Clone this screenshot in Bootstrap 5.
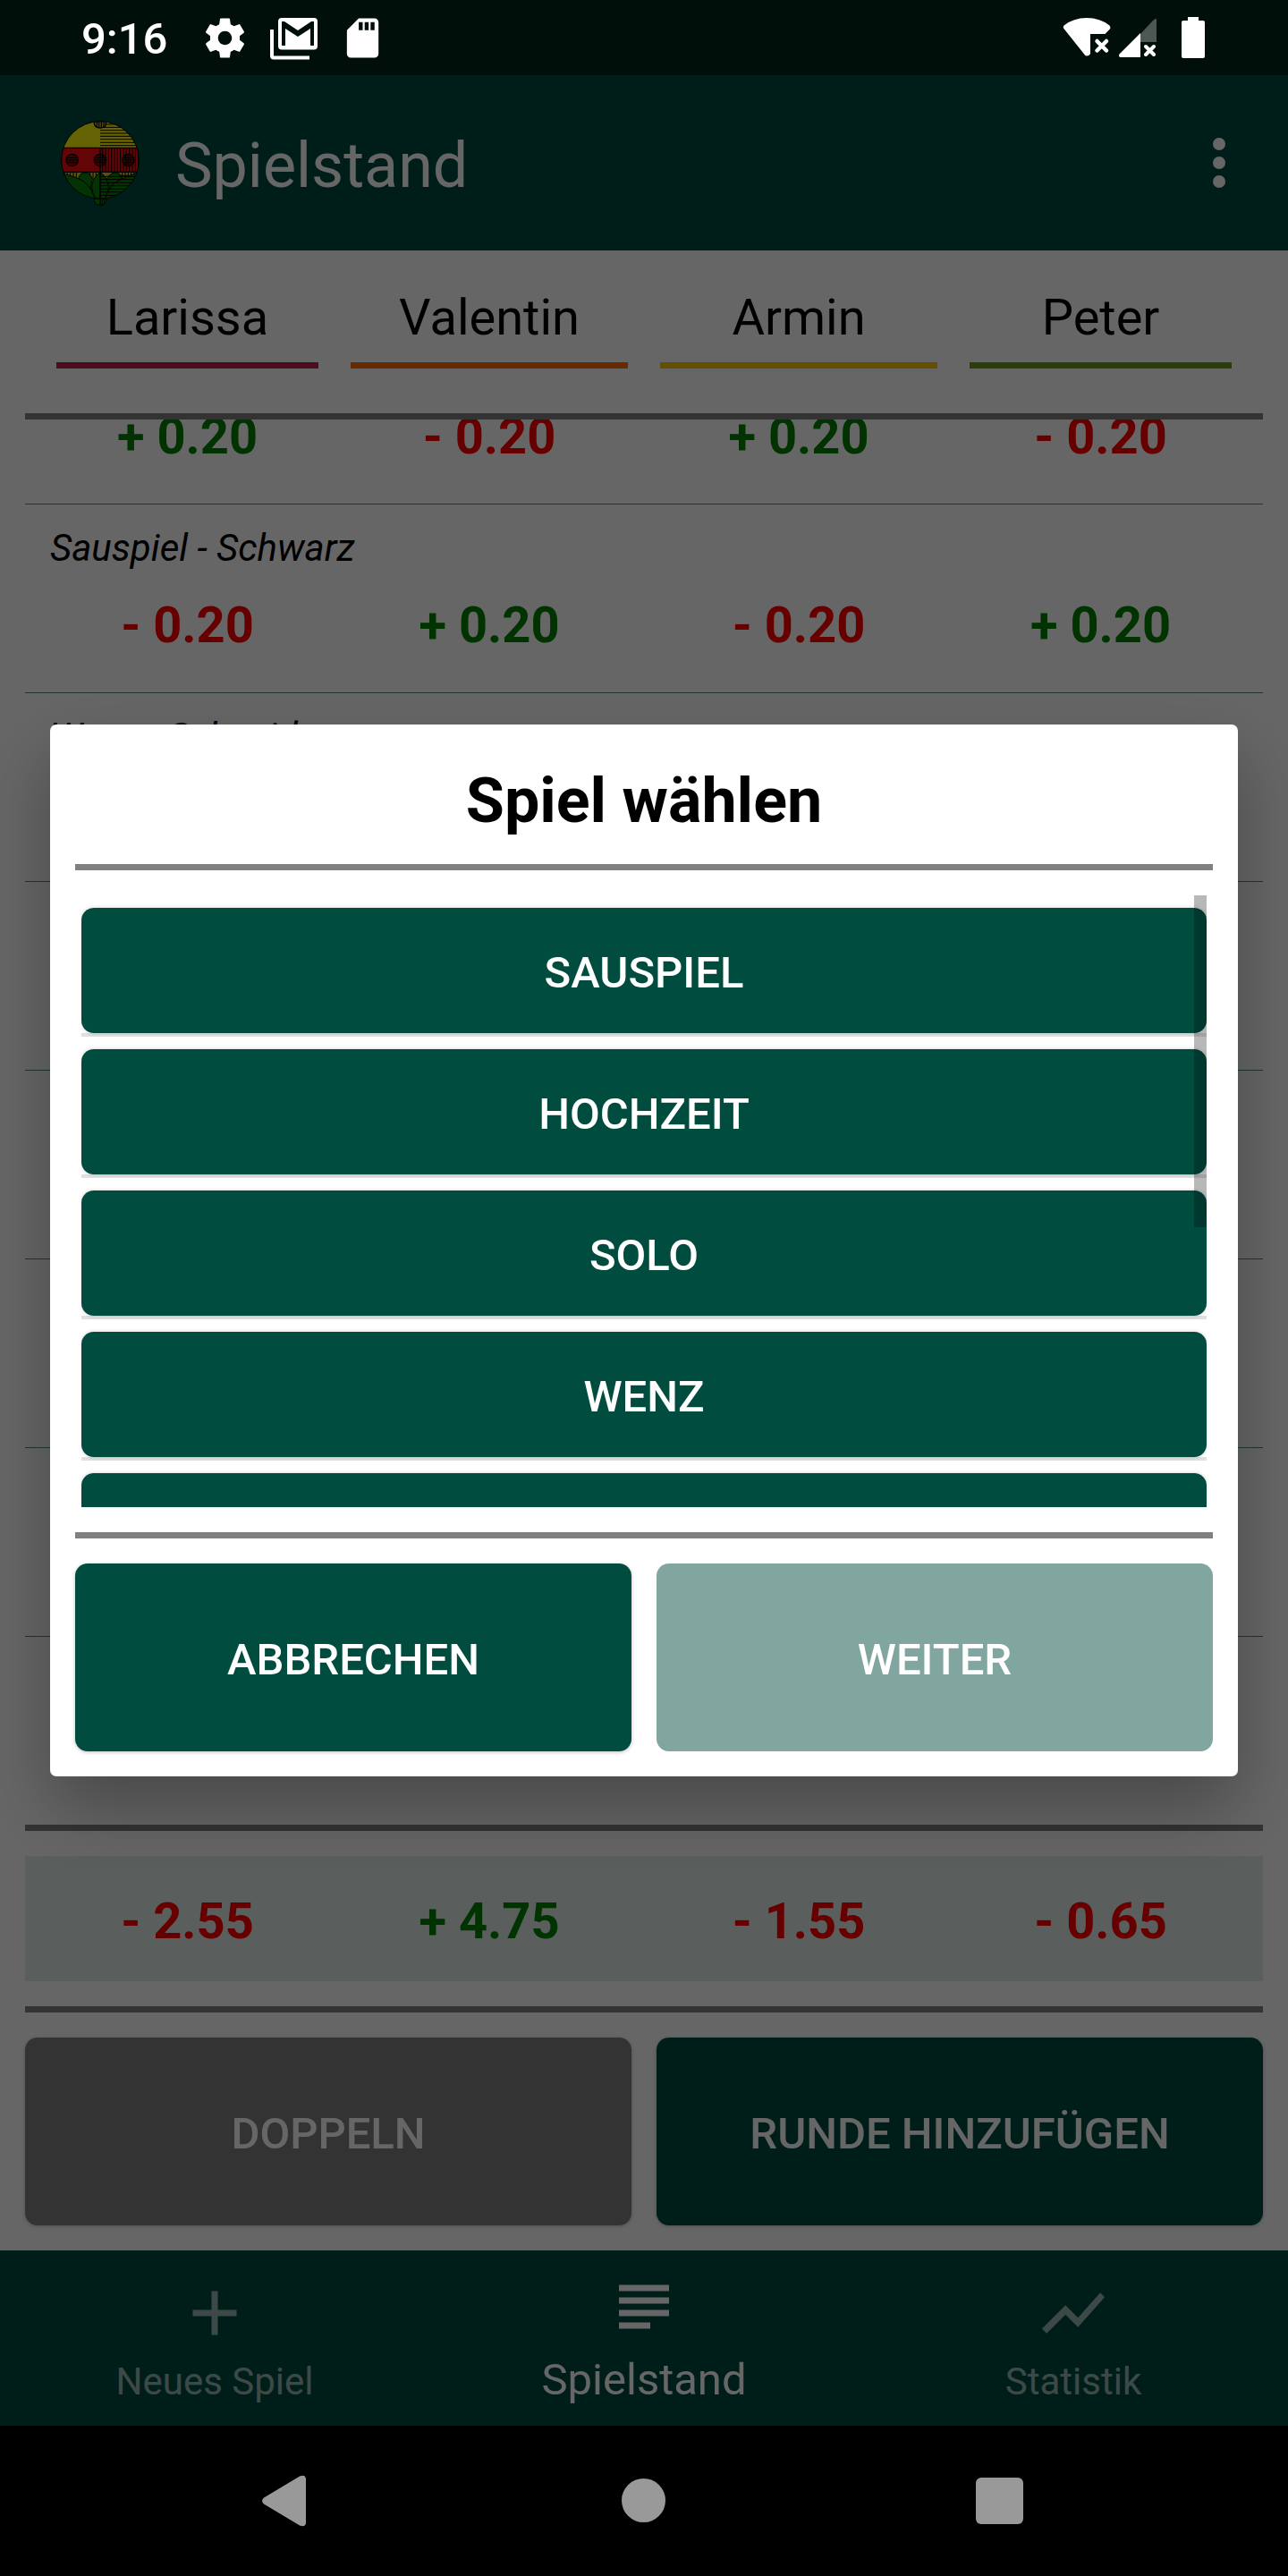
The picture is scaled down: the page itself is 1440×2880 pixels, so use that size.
<!DOCTYPE html>
<html lang="de">
<head>
<meta charset="utf-8">
<meta name="viewport" content="width=device-width, initial-scale=1">
<title>Spielstand</title>
<link href="https://cdn.jsdelivr.net/npm/bootstrap@5.3.0/dist/css/bootstrap.min.css" rel="stylesheet">
<style>
  :root { --brand: #004d40; --rule: #808080; }
  body { font-family: Roboto, "Liberation Sans", sans-serif; color: #000; background: #fff; }
  svg { display: block; }

  /* system bars stay above the dimmed page */
  .status-strip, .system-keys { position: relative; z-index: 1060; }
  .status-strip { height: 84px; padding: 0 93px 0 91px; background: #000f0a; color: #fff; font-size: 49px; font-weight: 500; line-height: 56px; }
  .status-icons { gap: 24px; margin-left: 38px; }
  .system-keys { height: 168px; background: #000; color: #999; gap: 316px; }
  .system-keys button { all: unset; }

  .app-bar { height: 196px; padding: 0 66px; background: var(--brand); color: #fff; }
  .app-title { font-size: 70px; line-height: 82px; padding-top: 5px; margin-left: 38px; }
  .icon-btn { all: unset; }

  .rule { height: 7px; background: var(--rule); flex-shrink: 0; }
  .board { padding: 0 28px 28px; min-height: 0; }
  .score-grid { width: 100%; table-layout: fixed; border-collapse: separate; border-spacing: 0; flex-shrink: 0; }
  .score-grid th, .score-grid td { padding: 0 18px; text-align: center; font-size: 56px; line-height: 66px; }
  .score-grid th:first-child, .score-grid td:first-child { padding-left: 35px; }
  .score-grid th:last-child, .score-grid td:last-child { padding-right: 35px; }
  .player-head { margin: 42px 0 50px; }
  .player-head th { font-weight: 400; }
  .player-name { display: block; padding-bottom: 17px; border-bottom: 7px solid; }
  .tone-berry { border-color: #c2224f; }
  .tone-orange { border-color: #ff6b00; }
  .tone-gold { border-color: #fac400; }
  .tone-leaf { border-color: #6e9a1f; }

  .round-list { min-height: 0; overflow: hidden; }
  .score-grid .round-name td { height: 74px; padding: 24px 28px 0; font-size: 42px; line-height: 50px; font-style: italic; text-align: left; }
  .score-grid .round-score td { height: 137px; padding-top: 28px; padding-bottom: 42px; font-weight: 700; border-bottom: 1px solid #4a8c7c; }
  .score-grid tbody:last-child .round-score td { height: 136px; border-bottom: 0; }
  .score-grid td.plus { color: #008000; }
  .score-grid td.minus { color: #f00; }
  .total-band { margin: 28px 0; background: #e0eae8; }
  .score-grid.total-band td { height: 140px; padding-top: 6px; font-weight: 700; }

  .act { border: 0; border-radius: 14px; padding: 6px 0 0; background: var(--brand); color: #fff; font-size: 49px; line-height: 58px; font-weight: 500; text-transform: uppercase; }
  .act-tall { height: 210px; flex: 1 1 0; }
  .act-raised { box-shadow: 0 1px 4px rgba(0, 0, 0, .25); }
  .act-grey { background: #808080; }
  .act:disabled { background: #80a69f; color: #fff; }
  .btn-pair { gap: 28px; padding-top: 28px; }

  .tabs { height: 196px; background: var(--brand); }
  .tabs a { flex: 1 1 0; padding-top: 28px; color: rgba(255, 255, 255, .6); font-size: 42px; line-height: 50px; text-decoration: none; }
  .tabs a span { padding-top: 10px; }
  .tabs a.active { padding-top: 21px; color: #fff; font-size: 49px; line-height: 60px; }

  .modal-backdrop.show { opacity: .6; }
  .pick-modal { padding: 84px 56px 168px; }
  .pick-modal .modal-content { border: 0; border-radius: 7px; padding: 0 28px 28px; color: #000; box-shadow: 0 36px 80px rgba(0, 0, 0, .3); }
  .pick-title { margin: 0; padding: 44px 0 30px; font-size: 70px; line-height: 82px; font-weight: 700; }
  .pick-scroll { position: relative; height: 684px; margin: 28px 7px; overflow: hidden; }
  .pick-list { padding-top: 14px; gap: 14px; }
  .pick-list li { border-bottom: 4px solid #e0e0e0; }
  .pick-list .act { display: block; width: 100%; height: 140px; box-shadow: 0 0 4px rgba(0, 0, 0, .2); }
  .pick-thumb { position: absolute; top: 0; right: 0; width: 14px; height: 371px; background: rgba(0, 0, 0, .28); }
</style>
<script src="https://cdn.jsdelivr.net/npm/bootstrap@5.3.0/dist/js/bootstrap.bundle.min.js"></script>
</head>
<body class="d-flex flex-column vh-100 overflow-hidden">

<div class="status-strip d-flex align-items-center flex-shrink-0">
  <span class="pt-1">9:16</span>
  <div class="status-icons d-flex align-items-center">
    <svg width="53" height="53" viewBox="0 0 24 24" fill="currentColor"><path d="M19.43 12.98c.04-.32.07-.64.07-.98s-.03-.66-.07-.98l2.11-1.65c.19-.15.24-.42.12-.64l-2-3.46c-.12-.22-.39-.3-.61-.22l-2.49 1c-.52-.4-1.08-.73-1.69-.98l-.38-2.65C14.46 2.18 14.25 2 14 2h-4c-.25 0-.46.18-.49.42l-.38 2.65c-.61.25-1.17.59-1.69.98l-2.49-1c-.23-.09-.49 0-.61.22l-2 3.46c-.13.22-.07.49.12.64l2.11 1.65c-.04.32-.07.65-.07.98s.03.66.07.98l-2.11 1.65c-.19.15-.24.42-.12.64l2 3.46c.12.22.39.3.61.22l2.49-1c.52.4 1.08.73 1.69.98l.38 2.65c.03.24.24.42.49.42h4c.25 0 .46-.18.49-.42l.38-2.65c.61-.25 1.17-.59 1.69-.98l2.49 1c.23.09.49 0 .61-.22l2-3.46c.12-.22.07-.49-.12-.64l-2.11-1.65zM12 15.5c-1.93 0-3.5-1.57-3.5-3.5s1.57-3.5 3.5-3.5 3.5 1.57 3.5 3.5-1.57 3.5-3.5 3.5z"/></svg>
    <svg width="53" height="53" viewBox="0 0 53 53" fill="none"><path d="M2 17v29.500q0 2 2 2h40" stroke="currentColor" stroke-width="4"/><path fill="currentColor" fill-rule="evenodd" d="M13 4h36q4 0 4 4v27.500q0 4-4 4H13q-4 0-4-4V8q0-4 4-4zM13 8v27h4V16l14 9 14-9v19h4V8h-3L31 18 16 8z"/></svg>
    <svg width="53" height="53" viewBox="0 0 24 24" fill="currentColor"><path d="M18 2h-8L4.020 8 4 20c0 1.100.9 2 2 2h12c1.100 0 2-.9 2-2V4c0-1.100-.9-2-2-2zm-6 6h-2V4h2v4zm3 0h-2V4h2v4zm3 0h-2V4h2v4z"/></svg>
  </div>
  <div class="d-flex align-items-center ms-auto">
    <svg width="54" height="46" viewBox="0 0 54 46" fill="currentColor"><path d="M1.500 9.500Q12 1 27 1t25.500 8.500q1.500 2 .3 4L47.500 19H31v22q-1 2.500-4 2.500-1.500 0-2.500-1.500L1 12.500q-.8-1.500.5-3z"/><path d="M38.500 27l10.500 10.500M49 27L38.500 37.500" stroke="currentColor" stroke-width="4.500" stroke-linecap="round"/></svg>
    <svg class="ms-2" width="43" height="46" viewBox="0 0 43 46" fill="currentColor"><path d="M43 2v26H25V19L39 4q2-2 4-2z" opacity=".3"/><path d="M25 18v27H2.500Q0 44 1.500 41.500z"/><path d="M31 33l9 9M40 33l-9 9" stroke="currentColor" stroke-width="4" stroke-linecap="round"/></svg>
    <svg class="ms-4" width="30" height="46" viewBox="0 0 30 46" fill="currentColor"><path d="M11 0h12v4h5q2 0 2 2v38q0 2-2 2H6q-2 0-2-2V6q0-2 2-2h5z"/></svg>
  </div>
</div>

<header class="app-bar d-flex align-items-center flex-shrink-0">
  <svg width="92" height="98" viewBox="48 36 276 294" aria-label="Logo">
    <defs>
      <clipPath id="disc"><circle cx="186" cy="174" r="130"/></clipPath>
      <clipPath id="right-half"><rect x="186" y="40" width="140" height="270"/></clipPath>
    </defs>
    <g clip-path="url(#disc)">
      <rect x="50" y="40" width="280" height="93" fill="#fff80a"/>
      <rect x="50" y="133" width="280" height="81" fill="#f80a10"/>
      <rect x="50" y="214" width="280" height="92" fill="#e0c810"/>
      <path d="M66 214v30M76 214v30M86 214v30M96 214v30M106 214v30M152 214v24M162 214v24M172 214v24M260 214v40M270 214v30M280 214v24M290 214v24M300 214v24M250 226h60M250 236h60" stroke="#000" stroke-width="3"/>
      <g fill="#088008" stroke="#000" stroke-width="3">
        <path d="M112 242q4-28 24-26 16 0 24 22-10 24-2 44-14-30-46-40z"/>
        <path d="M260 242q-4-28-24-26-16 0-30 24v40z"/>
        <path d="M54 218Q112 230 136 250T170 312H90z"/>
        <path d="M318 214Q236 242 222 262T200 312H318z"/>
        <path d="M186 214q-28 22-28 52 4 36 28 44z"/>
        <path d="M186 214q28 22 28 52-4 36-28 44z"/>
      </g>
      <g clip-path="url(#right-half)" stroke="#000" stroke-width="3">
        <path d="M186 54h140M186 64h140M186 74h140M186 84h140M186 94h140M186 104h140M186 115h140M186 125h140"/>
        <path d="M194 133v81M204 133v81M214 133v81M224 133v81M234 133v81M244 133v81M254 133v81M264 133v81M274 133v81M284 133v81M294 133v81M304 133v81M314 133v81"/>
        <path d="M186 229h140M186 239h140M186 250h140M186 260h140M186 271h140M186 281h140M186 292h140"/>
      </g>
      <path d="M50 133h280M50 214h280M186 133v180" stroke="#000" stroke-width="4"/>
      <path d="M166 44v8q3 14 20 14t20-14v-8z" fill="#c0a810" stroke="#000" stroke-width="4"/>
      <path d="M175 44v20M182 44v20M190 44v20M198 44v18" stroke="#000" stroke-width="3"/>
    </g>
    <circle cx="186" cy="174" r="130" fill="none" stroke="#000" stroke-width="3"/>
    <g fill="#900a0a" stroke="#000" stroke-width="4"><circle cx="92" cy="174" r="20"/><circle cx="186" cy="174" r="20"/><circle cx="280" cy="174" r="20"/></g>
    <path d="M74 166h36M74 174h36M74 182h36M168 166h36M168 174h36M168 182h36M262 166h36M262 174h36M262 182h36M186 154v40M194 156v36M272 156v36M280 154v40M288 156v36" stroke="#000" stroke-width="3"/>
    <path d="M166 304h40v6q-3 15-20 15t-20-15z" fill="#088008" stroke="#000" stroke-width="3"/><path d="M186 304v20M192 304v20M199 304v18" stroke="#000" stroke-width="3"/>
  </svg>
  <h1 class="app-title mb-0 fw-normal">Spielstand</h1>
  <button class="icon-btn ms-auto" type="button" aria-label="Menü">
    <svg width="22" height="56" viewBox="0 0 22 56" fill="#fff"><circle cx="11" cy="7" r="7"/><circle cx="11" cy="28" r="7"/><circle cx="11" cy="49" r="7"/></svg>
  </button>
</header>

<main class="board d-flex flex-column flex-fill">
  <table class="score-grid player-head">
    <thead><tr>
      <th scope="col"><span class="player-name tone-berry">Larissa</span></th>
      <th scope="col"><span class="player-name tone-orange">Valentin</span></th>
      <th scope="col"><span class="player-name tone-gold">Armin</span></th>
      <th scope="col"><span class="player-name tone-leaf">Peter</span></th>
    </tr></thead>
  </table>
  <div class="rule"></div>
  <div class="round-list d-flex flex-column flex-fill justify-content-end">
    <table class="score-grid">
      <tbody>
        <tr class="round-name"><td colspan="4"></td></tr>
        <tr class="round-score"><td class="plus">+ 0.20</td><td class="minus">- 0.20</td><td class="plus">+ 0.20</td><td class="minus">- 0.20</td></tr>
      </tbody>
      <tbody>
        <tr class="round-name"><td colspan="4">Sauspiel - Schwarz</td></tr>
        <tr class="round-score"><td class="minus">- 0.20</td><td class="plus">+ 0.20</td><td class="minus">- 0.20</td><td class="plus">+ 0.20</td></tr>
      </tbody>
      <tbody>
        <tr class="round-name"><td colspan="4">Wenz - Schneider</td></tr>
        <tr class="round-score"><td></td><td></td><td></td><td></td></tr>
      </tbody>
      <tbody><tr class="round-name"><td colspan="4"></td></tr><tr class="round-score"><td></td><td></td><td></td><td></td></tr></tbody>
      <tbody><tr class="round-name"><td colspan="4"></td></tr><tr class="round-score"><td></td><td></td><td></td><td></td></tr></tbody>
      <tbody><tr class="round-name"><td colspan="4"></td></tr><tr class="round-score"><td></td><td></td><td></td><td></td></tr></tbody>
      <tbody><tr class="round-name"><td colspan="4"></td></tr><tr class="round-score"><td></td><td></td><td></td><td></td></tr></tbody>
      <tbody><tr class="round-name"><td colspan="4"></td></tr><tr class="round-score"><td></td><td></td><td></td><td></td></tr></tbody>
    </table>
  </div>
  <div class="rule"></div>
  <table class="score-grid total-band">
    <tbody><tr><td class="minus">- 2.55</td><td class="plus">+ 4.75</td><td class="minus">- 1.55</td><td class="minus">- 0.65</td></tr></tbody>
  </table>
  <div class="rule"></div>
  <div class="btn-pair d-flex">
    <button type="button" class="act act-tall act-raised act-grey">Doppeln</button>
    <button type="button" class="act act-tall act-raised">Runde hinzufügen</button>
  </div>
</main>

<nav class="tabs d-flex flex-shrink-0">
  <a href="#neu" class="d-flex flex-column align-items-center">
    <svg width="84" height="84" viewBox="0 0 24 24" fill="currentColor"><path d="M19 13h-6v6h-2v-6H5v-2h6V5h2v6h6v2z"/></svg>
    <span>Neues Spiel</span>
  </a>
  <a href="#stand" class="active d-flex flex-column align-items-center" aria-current="page">
    <svg width="84" height="84" viewBox="0 0 24 24" fill="currentColor"><path d="M14 17H4v2h10v-2zm6-8H4v2h16V9zM4 15h16v-2H4v2zM4 5v2h16V5H4z"/></svg>
    <span>Spielstand</span>
  </a>
  <a href="#statistik" class="d-flex flex-column align-items-center">
    <svg width="84" height="84" viewBox="0 0 24 24" fill="currentColor"><path d="M3.500 18.490l6-6.010 4 4L22 6.920l-1.410-1.410-7.090 7.970-4-4L2 16.990z"/></svg>
    <span>Statistik</span>
  </a>
</nav>

<div class="system-keys d-flex align-items-center justify-content-center flex-shrink-0">
  <button type="button" aria-label="Zurück"><svg width="84" height="84" viewBox="0 0 84 84" fill="currentColor"><path d="M57 14.500q6-2.500 7 2.500v50q-1 5-7 2.500L17 45.500q-4-3.500 0-7z"/></svg></button>
  <button type="button" aria-label="Startseite"><svg width="84" height="84" viewBox="0 0 84 84" fill="currentColor"><circle cx="41.500" cy="41.500" r="24.500"/></svg></button>
  <button type="button" aria-label="Übersicht"><svg width="84" height="84" viewBox="0 0 84 84" fill="currentColor"><rect x="13" y="16" width="53" height="52" rx="6"/></svg></button>
</div>

<div class="modal-backdrop show"></div>
<div class="modal show d-flex align-items-center pick-modal" role="dialog" aria-modal="true" aria-labelledby="pick-title">
  <div class="modal-content">
    <h2 class="pick-title text-center" id="pick-title">Spiel wählen</h2>
    <div class="rule"></div>
    <div class="pick-scroll">
      <ul class="pick-list list-unstyled d-flex flex-column mb-0">
        <li><button type="button" class="act">Sauspiel</button></li>
        <li><button type="button" class="act">Hochzeit</button></li>
        <li><button type="button" class="act">Solo</button></li>
        <li><button type="button" class="act">Wenz</button></li>
        <li><button type="button" class="act">Geier</button></li>
      </ul>
      <div class="pick-thumb"></div>
    </div>
    <div class="rule"></div>
    <div class="btn-pair d-flex">
      <button type="button" class="act act-tall act-raised">Abbrechen</button>
      <button type="button" class="act act-tall" disabled>Weiter</button>
    </div>
  </div>
</div>
</body>
</html>
